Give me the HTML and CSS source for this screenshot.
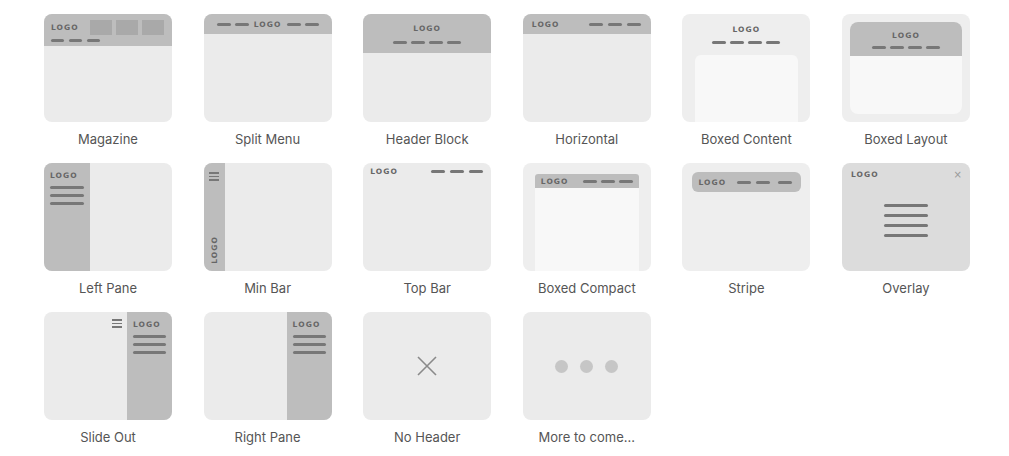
FILE: index.html
```html
<!DOCTYPE html>
<html lang="en">
<head>
  <meta charset="UTF-8" />
  <meta name="viewport" content="width=device-width, initial-scale=1.0"/>
  <title>Header layouts</title>
  <link rel="stylesheet" href="styles.css">
</head>
<body>
  <div class="layouts">

    <!-- Row 1 -->
    <div class="option">
      <div class="thumb">
        <div class="mag-head">
          <div class="mag-top">
            <span class="logo">LOGO</span>
            <div class="mag-boxes"><i></i><i></i><i></i></div>
          </div>
          <div class="dashes"><i></i><i></i><i></i></div>
        </div>
      </div>
      <div class="label">Magazine</div>
    </div>

    <div class="option">
      <div class="thumb">
        <div class="split-head">
          <div class="dashes"><i></i><i></i></div>
          <span class="logo">LOGO</span>
          <div class="dashes"><i></i><i></i></div>
        </div>
      </div>
      <div class="label">Split Menu</div>
    </div>

    <div class="option">
      <div class="thumb">
        <div class="block-head">
          <span class="logo">LOGO</span>
          <div class="dashes"><i></i><i></i><i></i><i></i></div>
        </div>
      </div>
      <div class="label">Header Block</div>
    </div>

    <div class="option">
      <div class="thumb">
        <div class="horiz-head">
          <span class="logo">LOGO</span>
          <div class="dashes"><i></i><i></i><i></i></div>
        </div>
      </div>
      <div class="label">Horizontal</div>
    </div>

    <div class="option">
      <div class="thumb light boxed-content">
        <span class="logo">LOGO</span>
        <div class="dashes"><i></i><i></i><i></i><i></i></div>
        <div class="page"></div>
      </div>
      <div class="label">Boxed Content</div>
    </div>

    <div class="option">
      <div class="thumb light boxed-layout">
        <div class="frame">
          <div class="frame-head">
            <span class="logo">LOGO</span>
            <div class="dashes"><i></i><i></i><i></i><i></i></div>
          </div>
        </div>
      </div>
      <div class="label">Boxed Layout</div>
    </div>

    <!-- Row 2 -->
    <div class="option">
      <div class="thumb side left">
        <div class="pane">
          <span class="logo">LOGO</span>
          <div class="lines"><i></i><i></i><i></i></div>
        </div>
      </div>
      <div class="label">Left Pane</div>
    </div>

    <div class="option">
      <div class="thumb side">
        <div class="minbar">
          <div class="burger"><i></i><i></i><i></i></div>
          <span class="logo vertical">LOGO</span>
        </div>
      </div>
      <div class="label">Min Bar</div>
    </div>

    <div class="option">
      <div class="thumb">
        <div class="topbar">
          <span class="logo">LOGO</span>
          <div class="dashes"><i></i><i></i><i></i></div>
        </div>
      </div>
      <div class="label">Top Bar</div>
    </div>

    <div class="option">
      <div class="thumb light boxed-compact">
        <div class="frame">
          <div class="compact-head">
            <span class="logo">LOGO</span>
            <div class="dashes"><i></i><i></i><i></i></div>
          </div>
        </div>
      </div>
      <div class="label">Boxed Compact</div>
    </div>

    <div class="option">
      <div class="thumb light stripe">
        <div class="stripe-bar">
          <span class="logo">LOGO</span>
          <div class="dashes"><i></i><i></i><i></i></div>
        </div>
      </div>
      <div class="label">Stripe</div>
    </div>

    <div class="option">
      <div class="thumb overlay">
        <div class="overlay-top">
          <span class="logo">LOGO</span>
          <span class="close">&times;</span>
        </div>
        <div class="lines"><i></i><i></i><i></i><i></i></div>
      </div>
      <div class="label">Overlay</div>
    </div>

    <!-- Row 3 -->
    <div class="option">
      <div class="thumb side">
        <div class="main">
          <div class="burger"><i></i><i></i><i></i></div>
        </div>
        <div class="pane">
          <span class="logo">LOGO</span>
          <div class="lines"><i></i><i></i><i></i></div>
        </div>
      </div>
      <div class="label">Slide Out</div>
    </div>

    <div class="option">
      <div class="thumb side">
        <div class="main"></div>
        <div class="pane">
          <span class="logo">LOGO</span>
          <div class="lines"><i></i><i></i><i></i></div>
        </div>
      </div>
      <div class="label">Right Pane</div>
    </div>

    <div class="option">
      <div class="thumb centered">
        <svg width="22" height="22" viewBox="0 0 22 22">
          <path d="M2 2 L20 20 M20 2 L2 20" stroke="#8a8a8a" stroke-width="1.6" fill="none"/>
        </svg>
      </div>
      <div class="label">No Header</div>
    </div>

    <div class="option">
      <div class="thumb centered dots">
        <i></i><i></i><i></i>
      </div>
      <div class="label">More to come...</div>
    </div>

  </div>
</body>
</html>
```

FILE: styles.css
```css
body {
  margin: 0;
  background: #fff;
  font-family: Inter, "Liberation Sans", sans-serif;
}
.layouts {
  display: grid;
  grid-template-columns: repeat(6, 128px);
  column-gap: 31.6px;
  row-gap: 15px;
  padding: 14px 0 0 44px;
}
.label {
  margin-top: 9px;
  height: 17px;
  line-height: 17px;
  font-size: 13px;
  color: #555;
  text-align: center;
}
.thumb {
  position: relative;
  height: 108px;
  border-radius: 8px;
  overflow: hidden;
  background: #ebebeb;
  display: flex;
  flex-direction: column;
}
.thumb.light { background: #eeeeee; }

.logo {
  font-family: "DejaVu Sans", sans-serif;
  font-weight: bold;
  font-size: 7.5px;
  letter-spacing: 1.1px;
  color: #666;
  line-height: 9px;
}
.dashes {
  display: flex;
  gap: 4px;
}
.dashes i {
  display: block;
  width: 14px;
  height: 3px;
  border-radius: 2px;
  background: #777;
}
.lines {
  display: flex;
  flex-direction: column;
  gap: 5px;
}
.lines i {
  display: block;
  height: 3px;
  border-radius: 2px;
  background: #777;
}
.burger {
  display: flex;
  flex-direction: column;
  gap: 2px;
  width: 10px;
}
.burger i {
  display: block;
  height: 1.5px;
  background: #777;
}

/* Magazine */
.mag-head {
  background: #bdbdbd;
  height: 32px;
  box-sizing: border-box;
  padding: 6px 8px 0 7px;
}
.mag-top {
  display: flex;
  justify-content: space-between;
  align-items: center;
}
.mag-boxes { display: flex; gap: 4px; }
.mag-boxes i {
  display: block;
  width: 22px;
  height: 15px;
  background: #a9a9a9;
}
.mag-head .dashes { margin-top: 4px; gap: 5px; }
.mag-head .dashes i { width: 13px; }

/* Split menu */
.split-head {
  background: #bdbdbd;
  height: 20px;
  display: flex;
  align-items: center;
  justify-content: center;
  gap: 5px;
}

/* Header block */
.block-head {
  background: #bdbdbd;
  height: 39px;
  display: flex;
  flex-direction: column;
  align-items: center;
  padding-top: 10px;
  box-sizing: border-box;
  gap: 8px;
}

/* Horizontal */
.horiz-head {
  background: #bdbdbd;
  height: 20px;
  display: flex;
  align-items: center;
  justify-content: space-between;
  padding: 0 10px 0 9px;
}
.horiz-head .dashes { gap: 5px; }

/* Boxed content */
.boxed-content {
  align-items: center;
  padding-top: 11px;
  box-sizing: border-box;
}
.boxed-content .dashes { margin-top: 7px; }
.boxed-content .page {
  align-self: stretch;
  flex: 1;
  margin: 11px 12px 0 13px;
  background: #f8f8f8;
  border-radius: 6px 6px 0 0;
}

/* Boxed layout */
.boxed-layout { padding: 8px; box-sizing: border-box; }
.frame {
  flex: 1;
  background: #f8f8f8;
  border-radius: 8px;
  overflow: hidden;
}
.frame-head {
  background: #bdbdbd;
  height: 34px;
  display: flex;
  flex-direction: column;
  align-items: center;
  padding-top: 9px;
  box-sizing: border-box;
  gap: 6px;
}

/* Side panes */
.thumb.side { flex-direction: row; }
.pane {
  width: 45px;
  background: #bdbdbd;
  padding: 8px 6px 0 6px;
  box-sizing: border-box;
}
.pane .logo { display: block; margin-bottom: 6px; }
.left .pane { width: 46px; }
.main {
  flex: 1;
  display: flex;
  justify-content: flex-end;
  padding: 7px 5px 0 0;
}
.main .burger { width: 10px; }

.minbar {
  width: 21px;
  background: #bdbdbd;
  display: flex;
  flex-direction: column;
  align-items: center;
  justify-content: space-between;
  padding: 9px 0 7px;
  box-sizing: border-box;
}
.logo.vertical {
  writing-mode: vertical-rl;
  transform: rotate(180deg);
}

/* Top bar */
.topbar {
  display: flex;
  align-items: center;
  justify-content: space-between;
  padding: 4px 8px 0 7px;
}
.topbar .dashes { gap: 5px; }

/* Boxed compact */
.boxed-compact { padding: 11px 12px 0; box-sizing: border-box; }
.boxed-compact .frame { border-radius: 3px 3px 0 0; }
.compact-head {
  background: #bdbdbd;
  height: 14px;
  display: flex;
  align-items: center;
  justify-content: space-between;
  padding: 0 6px;
}

/* Stripe */
.stripe { padding: 9px 9px 0 10px; box-sizing: border-box; }
.stripe-bar {
  background: #bdbdbd;
  height: 20px;
  border-radius: 6px;
  display: flex;
  align-items: center;
  justify-content: space-between;
  padding: 0 9px 0 6px;
}
.stripe-bar .dashes { gap: 5px; }
.stripe-bar .dashes i:last-child { margin-left: 3px; }

/* Overlay */
.overlay { background: #dcdcdc; }
.overlay-top {
  display: flex;
  justify-content: space-between;
  align-items: center;
  padding: 7px 8px 0 9px;
}
.close {
  font-family: "DejaVu Sans", sans-serif;
  font-size: 10px;
  line-height: 9px;
  color: #999;
}
.overlay .lines {
  width: 44px;
  margin: 25px auto 0;
  gap: 7px;
}

/* No header / more */
.thumb.centered {
  align-items: center;
  justify-content: center;
}
.dots { flex-direction: row; gap: 12px; }
.dots i {
  display: block;
  width: 13px;
  height: 13px;
  border-radius: 50%;
  background: #c6c6c6;
}
```
